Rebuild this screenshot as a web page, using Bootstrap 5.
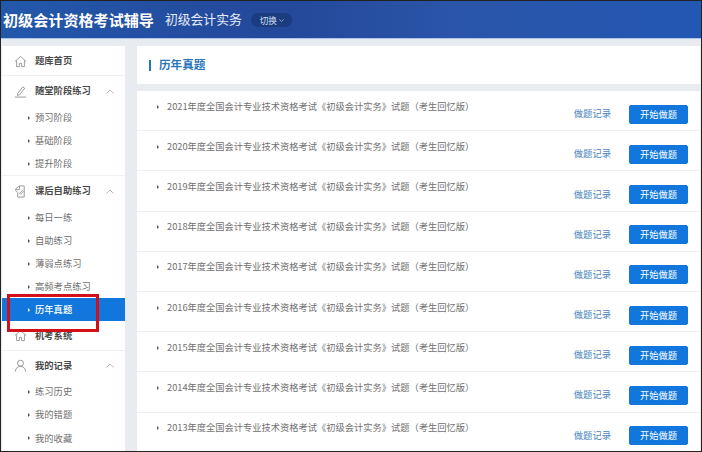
<!DOCTYPE html>
<html lang="zh"><head><meta charset="utf-8"><title>历年真题</title>
<link href="https://cdn.jsdelivr.net/npm/bootstrap@5.3.0/dist/css/bootstrap.min.css" rel="stylesheet">
<style>
html,body{height:452px;overflow:hidden}
body{font-family:"Noto Sans CJK SC","Liberation Sans",sans-serif;background:#222;color:#555;position:relative;padding:1px}
.frame{height:450px;background:#e8ebef;overflow:hidden}
.topbar{height:38px;background:linear-gradient(90deg,#2358ab,#24489a 40%,#2a55a8 65%,#2257b3);border-bottom:1px solid #a9c4e8;color:#fff;padding-left:2px}
.brand{font-size:15.1px;font-weight:700;line-height:1;margin-right:11px}
.course{font-size:12.8px;line-height:1;color:#e4ecf8;margin-right:9px}
.switcher{font-size:8.6px;background:#1c3c80;color:#d5e0f2;border-radius:7px;height:14px;padding:0 8px 0 9px;line-height:14px;margin-top:1px;gap:2px}
.switcher svg{width:5px;height:3px}
.workspace{padding:7px 0 0 1px;gap:12px}
.sidenav{width:123px;height:420px;background:#fff;flex:none}
.sn-head{height:29px;font-size:9.3px;font-weight:700;color:#4a4a4a;padding:1px 0 0 12px;gap:8px}
.sn-head svg.ico{width:13px;height:13px;flex:none}
.sn-first{height:30px;border-bottom:1px solid #eef0f2}
.sn-chev{margin-left:auto;margin-right:11px;width:8px;height:5px}
.sn-item{height:23.1px;font-size:9.3px;color:#707070;padding:2px 0 0 26px;gap:5px}
.sn-item::before{content:"";width:0;height:0;border-left:2.5px solid #555;border-top:2px solid transparent;border-bottom:2px solid transparent;flex:none}
.sn-group{border-bottom:1px solid #eef0f2;padding-bottom:1px}
.sn-item.on{background:#1277dc;color:#fff;font-weight:500}
.sn-item.on::before{border-left-color:#fff}
.redmark{position:absolute;left:7px;top:294px;width:92px;height:38px;border:3px solid #d3101a;z-index:3}
.mainarea{width:563px;flex:none}
.titlebar{height:38px;background:#fff;padding-left:12px;margin-bottom:7px;font-size:11.6px;font-weight:700;color:#2a76bd;gap:8px}
.titlebar i{display:block;width:2px;height:11px;background:#1a78c8}
.exam{height:40.2px;background:#fff;border-bottom:1px solid #f0f1f3;padding:0 12px 0 20px}
.exam-name{font-size:9.25px;color:#707070;gap:8px;margin-top:-8px;white-space:nowrap}
.exam-name::before{content:"";width:0;height:0;border-left:2.5px solid #555;border-top:2px solid transparent;border-bottom:2px solid transparent}
.exam-rec{font-size:9.3px;color:#4b86c0;margin-left:auto;margin-right:18px;margin-top:7px;text-decoration:none}
.exam-btn{--bs-btn-bg:#1277dc;--bs-btn-border-color:#1277dc;--bs-btn-color:#fff;--bs-btn-padding-x:0;--bs-btn-padding-y:0;--bs-btn-font-size:9.3px;--bs-btn-border-radius:2px;width:59px;height:19px;line-height:17px;margin-top:7px}
</style></head><body>
<div class="frame d-flex flex-column">
<header class="topbar d-flex align-items-center flex-shrink-0">
<span class="brand">初级会计资格考试辅导</span><span class="course">初级会计实务</span><span class="switcher d-inline-flex align-items-center">切换<svg viewBox="0 0 5 3" fill="none" stroke="#d5e0f2" stroke-width=".6"><path d="M.3.3 2.500 2.500 4.700.3"/></svg></span>
</header>
<div class="workspace d-flex">
<nav class="sidenav">
<div class="sn-head sn-first d-flex align-items-center"><svg class="ico" viewBox="0 0 14 14" fill="none" stroke="#888" stroke-width=".9"><path d="M1 7 7 1.5 13 7M2.8 6v6.5h3V9h2.4v3.5h3V6"/></svg>题库首页</div>
<div class="sn-group">
<div class="sn-head d-flex align-items-center"><svg class="ico" viewBox="0 0 14 14" fill="none" stroke="#888" stroke-width=".9"><path d="M4 9 9.5 2l2 1.5L6 10.5l-2.2.8zM1 13h12"/></svg>随堂阶段练习<svg class="sn-chev" viewBox="0 0 8 5" fill="none" stroke="#aaa" stroke-width=".8"><path d="M.5 4.5 4 1l3.500 3.500"/></svg></div>
<div class="sn-item d-flex align-items-center">预习阶段</div>
<div class="sn-item d-flex align-items-center">基础阶段</div>
<div class="sn-item d-flex align-items-center">提升阶段</div>
</div>
<div>
<div class="sn-head d-flex align-items-center"><svg class="ico" viewBox="0 0 14 14" fill="none" stroke="#888" stroke-width=".9"><path d="M2 4 6 1h5v12H4V8L1.500 5.500zM6 1v4H2M6 9l3-3 1 1-3 3z"/></svg>课后自助练习<svg class="sn-chev" viewBox="0 0 8 5" fill="none" stroke="#aaa" stroke-width=".8"><path d="M.5 4.500 4 1l3.500 3.500"/></svg></div>
<div class="sn-item d-flex align-items-center">每日一练</div>
<div class="sn-item d-flex align-items-center">自助练习</div>
<div class="sn-item d-flex align-items-center">薄弱点练习</div>
<div class="sn-item d-flex align-items-center">高频考点练习</div>
<div class="sn-item on d-flex align-items-center">历年真题</div>
</div>
<div class="sn-head sn-first d-flex align-items-center"><svg class="ico" viewBox="0 0 14 14" fill="none" stroke="#888" stroke-width=".9"><path d="M1 7 7 1.500 13 7M2.800 6v6.500h3V9h2.400v3.500h3V6"/></svg>机考系统</div>
<div>
<div class="sn-head d-flex align-items-center"><svg class="ico" viewBox="0 0 14 14" fill="none" stroke="#888" stroke-width=".9"><circle cx="7" cy="4.500" r="3.200"/><path d="M1.500 13.500c0-3.500 2.500-5.500 5.500-5.500s5.500 2 5.500 5.500"/></svg>我的记录<svg class="sn-chev" viewBox="0 0 8 5" fill="none" stroke="#aaa" stroke-width=".8"><path d="M.5 4.500 4 1l3.500 3.500"/></svg></div>
<div class="sn-item d-flex align-items-center">练习历史</div>
<div class="sn-item d-flex align-items-center">我的错题</div>
<div class="sn-item d-flex align-items-center">我的收藏</div>
</div>
</nav>
<main class="mainarea">
<div class="titlebar d-flex align-items-center"><i></i>历年真题</div>
<div class="exam d-flex align-items-center"><span class="exam-name d-flex align-items-center">2021年度全国会计专业技术资格考试《初级会计实务》试题（考生回忆版）</span><a class="exam-rec" href="#">做题记录</a><button class="btn exam-btn" type="button">开始做题</button></div>
<div class="exam d-flex align-items-center"><span class="exam-name d-flex align-items-center">2020年度全国会计专业技术资格考试《初级会计实务》试题（考生回忆版）</span><a class="exam-rec" href="#">做题记录</a><button class="btn exam-btn" type="button">开始做题</button></div>
<div class="exam d-flex align-items-center"><span class="exam-name d-flex align-items-center">2019年度全国会计专业技术资格考试《初级会计实务》试题（考生回忆版）</span><a class="exam-rec" href="#">做题记录</a><button class="btn exam-btn" type="button">开始做题</button></div>
<div class="exam d-flex align-items-center"><span class="exam-name d-flex align-items-center">2018年度全国会计专业技术资格考试《初级会计实务》试题（考生回忆版）</span><a class="exam-rec" href="#">做题记录</a><button class="btn exam-btn" type="button">开始做题</button></div>
<div class="exam d-flex align-items-center"><span class="exam-name d-flex align-items-center">2017年度全国会计专业技术资格考试《初级会计实务》试题（考生回忆版）</span><a class="exam-rec" href="#">做题记录</a><button class="btn exam-btn" type="button">开始做题</button></div>
<div class="exam d-flex align-items-center"><span class="exam-name d-flex align-items-center">2016年度全国会计专业技术资格考试《初级会计实务》试题（考生回忆版）</span><a class="exam-rec" href="#">做题记录</a><button class="btn exam-btn" type="button">开始做题</button></div>
<div class="exam d-flex align-items-center"><span class="exam-name d-flex align-items-center">2015年度全国会计专业技术资格考试《初级会计实务》试题（考生回忆版）</span><a class="exam-rec" href="#">做题记录</a><button class="btn exam-btn" type="button">开始做题</button></div>
<div class="exam d-flex align-items-center"><span class="exam-name d-flex align-items-center">2014年度全国会计专业技术资格考试《初级会计实务》试题（考生回忆版）</span><a class="exam-rec" href="#">做题记录</a><button class="btn exam-btn" type="button">开始做题</button></div>
<div class="exam d-flex align-items-center"><span class="exam-name d-flex align-items-center">2013年度全国会计专业技术资格考试《初级会计实务》试题（考生回忆版）</span><a class="exam-rec" href="#">做题记录</a><button class="btn exam-btn" type="button">开始做题</button></div>
</main>
</div>
</div>
<div class="redmark"></div>
</body></html>
